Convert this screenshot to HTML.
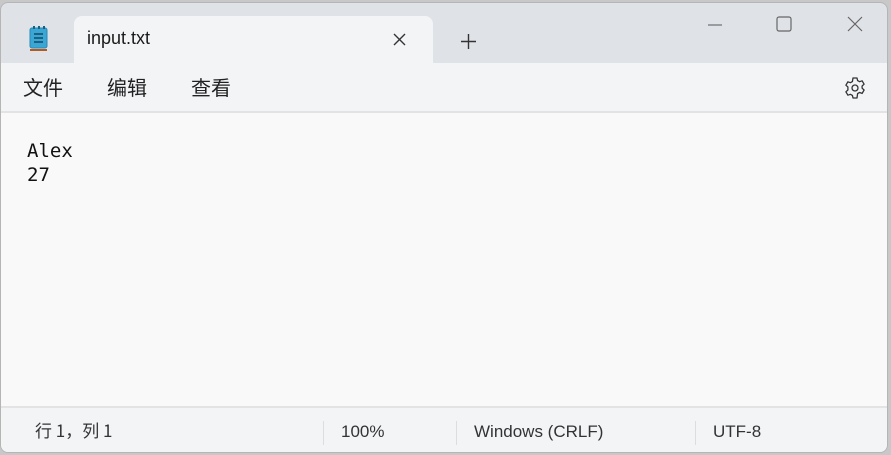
<!DOCTYPE html>
<html><head><meta charset="utf-8"><style>
body{margin:0;width:891px;height:455px;background:#c8c8c8;overflow:hidden;font-family:"Segoe UI","Liberation Sans","Noto Sans CJK SC",sans-serif;position:relative}
.win{position:absolute;left:0;top:2px;width:888px;height:451px;background:#dfe2e6;border:1px solid #b5b5b5;border-radius:8px;overflow:hidden;box-sizing:border-box}
.tab{position:absolute;left:73px;top:13px;width:359px;height:48px;background:#f3f4f6;border-radius:8px 8px 0 0}
.menu{position:absolute;left:0;top:60px;width:100%;height:48px;background:#f3f4f6;border-bottom:2px solid #e3e3e3}
.ed{position:absolute;left:0;top:110px;width:100%;height:293px;background:#f9f9f9}
.st{position:absolute;left:0;top:403px;width:100%;height:50px;background:#f3f4f6;border-top:2px solid #e3e3e3;font-size:17px;color:#333}
.t{position:absolute;white-space:nowrap}
.sep{position:absolute;top:13px;width:1px;height:24px;background:#ddd}
</style></head><body>
<div class="win">
<svg class="t" style="left:27px;top:22px" width="22" height="28" viewBox="0 0 22 28"><rect x="2" y="3" width="17" height="20" rx="2" fill="#3aa6d4"/><rect x="2" y="3" width="17" height="20" rx="2" fill="none" stroke="#2a88b8"/><g stroke="#1c5f80" stroke-width="2"><line x1="6" y1="9" x2="15" y2="9"/><line x1="6" y1="13" x2="15" y2="13"/><line x1="6" y1="17" x2="15" y2="17"/></g><g fill="#1c5f80"><rect x="5" y="1" width="2" height="3"/><rect x="10" y="1" width="2" height="3"/><rect x="15" y="1" width="2" height="3"/></g><rect x="2" y="24" width="17" height="2" fill="#b5591e"/></svg>
<div class="tab"></div>
<div class="t" style="left:86px;top:25px;font-size:18px;color:#1a1a1a">input.txt</div>
<svg class="t" style="left:392px;top:30px" width="13" height="13"><path d="M1 1L12 12M12 1L1 12" stroke="#333" stroke-width="1.4"/></svg>
<svg class="t" style="left:460px;top:31px" width="15" height="15"><path d="M7.5 0V15M0 7.5H15" stroke="#333" stroke-width="1.4"/></svg>
<svg class="t" style="left:706px;top:18px" width="16" height="8"><path d="M1 4H15" stroke="#555" stroke-width="1"/></svg>
<svg class="t" style="left:775px;top:13px" width="17" height="17"><rect x="1" y="1" width="14" height="14" rx="2" fill="none" stroke="#666" stroke-width="1.2"/></svg>
<svg class="t" style="left:846px;top:13px" width="16" height="16"><path d="M1 1L15 15M15 1L1 15" stroke="#666" stroke-width="1.2"/></svg>
<div class="menu">
<div class="t" style="left:22px;top:9px;font-size:20px;color:#222">文件</div>
<div class="t" style="left:106px;top:9px;font-size:20px;color:#222">编辑</div>
<div class="t" style="left:190px;top:9px;font-size:20px;color:#222">查看</div>
<svg class="t" style="left:842px;top:13px" width="24" height="24" viewBox="0 0 24 24"><path d="M10 2h4l.6 2.6 2 1.1 2.5-.9 2 3.4-2 1.8v2.2l2 1.8-2 3.4-2.5-.9-2 1.1L14 22h-4l-.6-2.6-2-1.1-2.5.9-2-3.4 2-1.8V11l-2-1.8 2-3.4 2.5.9 2-1.1z" fill="none" stroke="#333" stroke-width="1.3" stroke-linejoin="round"/><circle cx="12" cy="12" r="3" fill="none" stroke="#333" stroke-width="1.3"/></svg>
</div>
<div class="ed">
<div class="t" style="left:26px;top:26px;font:19px/24px 'DejaVu Sans Mono','Liberation Mono',monospace;color:#111">Alex<br>27</div>
</div>
<div class="st">
<div class="t" style="left:34px;top:10px;font-family:'Noto Sans CJK SC',sans-serif;font-size:17px;line-height:24px">行 1，列 1</div>
<div class="sep" style="left:322px"></div>
<div class="t" style="left:340px;top:14px">100%</div>
<div class="sep" style="left:455px"></div>
<div class="t" style="left:473px;top:14px">Windows (CRLF)</div>
<div class="sep" style="left:694px"></div>
<div class="t" style="left:712px;top:14px">UTF-8</div>
</div>
</div>
</body></html>
